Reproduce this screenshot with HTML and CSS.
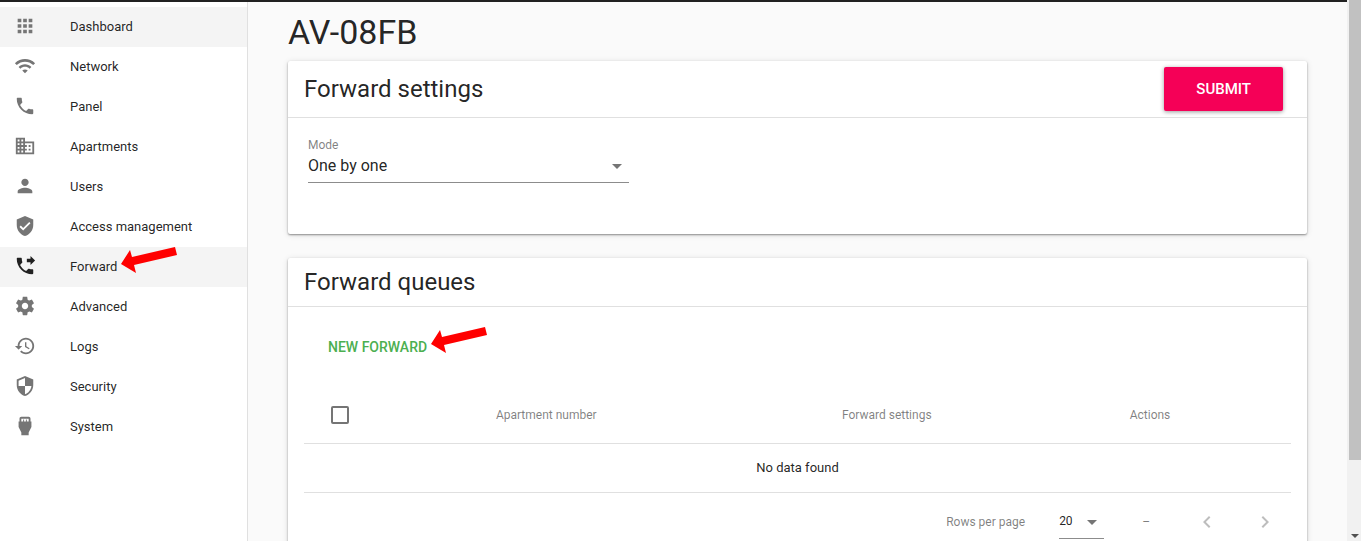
FILE: index.html
```html
<!DOCTYPE html>
<html lang="en">
<head>
    <meta charset="UTF-8">
    <meta name="viewport" content="width=device-width, initial-scale=1.0">
    <title>AV-08FB - Forward</title>
    <link rel="stylesheet" href="styles.css">
</head>
<body>
    <div class="page">
        <div class="topbar"></div>

        <div class="layout">
            <nav class="sidebar">
                <a href="#dashboard" class="nav-item highlighted">
                    <svg class="icon" viewBox="0 0 24 24"><path d="M4 8h4V4H4v4zm6 12h4v-4h-4v4zm-6 0h4v-4H4v4zm0-6h4v-4H4v4zm6 0h4v-4h-4v4zm6-10v4h4V4h-4zm-6 4h4V4h-4v4zm6 6h4v-4h-4v4zm0 6h4v-4h-4v4z"/></svg>
                    <span>Dashboard</span>
                </a>
                <a href="#network" class="nav-item">
                    <svg class="icon" viewBox="0 0 24 24"><path d="M1 9l2 2c4.97-4.97 13.03-4.97 18 0l2-2C16.93 2.93 7.08 2.93 1 9zm8 8l3 3 3-3c-1.65-1.66-4.34-1.66-6 0zm-4-4l2 2c2.76-2.76 7.24-2.76 10 0l2-2C15.14 9.14 8.87 9.14 5 13z"/></svg>
                    <span>Network</span>
                </a>
                <a href="#panel" class="nav-item">
                    <svg class="icon" viewBox="0 0 24 24"><path d="M6.62 10.79c1.44 2.83 3.76 5.14 6.59 6.59l2.2-2.2c.27-.27.67-.36 1.02-.24 1.12.37 2.33.57 3.57.57.55 0 1 .45 1 1V20c0 .55-.45 1-1 1-9.39 0-17-7.61-17-17 0-.55.45-1 1-1h3.5c.55 0 1 .45 1 1 0 1.25.2 2.45.57 3.57.11.35.03.74-.25 1.02l-2.2 2.2z"/></svg>
                    <span>Panel</span>
                </a>
                <a href="#apartments" class="nav-item">
                    <svg class="icon" viewBox="0 0 24 24"><path d="M12 7V3H2v18h20V7H12zM6 19H4v-2h2v2zm0-4H4v-2h2v2zm0-4H4V9h2v2zm0-4H4V5h2v2zm4 12H8v-2h2v2zm0-4H8v-2h2v2zm0-4H8V9h2v2zm0-4H8V5h2v2zm10 12h-8v-2h2v-2h-2v-2h2v-2h-2V9h8v10zm-2-8h-2v2h2v-2zm0 4h-2v2h2v-2z"/></svg>
                    <span>Apartments</span>
                </a>
                <a href="#users" class="nav-item">
                    <svg class="icon" viewBox="0 0 24 24"><path d="M12 12c2.21 0 4-1.79 4-4s-1.79-4-4-4-4 1.79-4 4 1.79 4 4 4zm0 2c-2.67 0-8 1.34-8 4v2h16v-2c0-2.66-5.33-4-8-4z"/></svg>
                    <span>Users</span>
                </a>
                <a href="#access" class="nav-item">
                    <svg class="icon" viewBox="0 0 24 24"><path d="M12 1L3 5v6c0 5.55 3.84 10.74 9 12 5.16-1.26 9-6.45 9-12V5l-9-4zm-2 16l-4-4 1.41-1.41L10 14.17l6.59-6.59L18 9l-8 8z"/></svg>
                    <span>Access management</span>
                </a>
                <a href="#forward" class="nav-item highlighted active">
                    <svg class="icon" viewBox="0 0 24 24"><path d="M18 11l5-5-5-5v3h-4v4h4v3zm2 4.5c-1.25 0-2.45-.2-3.57-.57-.35-.11-.74-.03-1.02.24l-2.2 2.2c-2.83-1.44-5.15-3.75-6.59-6.59l2.2-2.21c.28-.26.36-.65.25-1C8.7 6.45 8.5 5.25 8.5 4c0-.55-.45-1-1-1H4c-.55 0-1 .45-1 1 0 9.39 7.61 17 17 17 .55 0 1-.45 1-1v-3.5c0-.55-.45-1-1-1z"/></svg>
                    <span class="pointed">Forward
                        <svg class="pointer" viewBox="0 0 56 26"><path d="M0 17L9 3l2 7L54 0l2 8-43 10 2 8z"/></svg>
                    </span>
                </a>
                <a href="#advanced" class="nav-item">
                    <svg class="icon" viewBox="0 0 24 24"><path d="M19.43 12.98c.04-.32.07-.64.07-.98s-.03-.66-.07-.98l2.11-1.65c.19-.15.24-.42.12-.64l-2-3.46c-.12-.22-.39-.3-.61-.22l-2.49 1c-.52-.4-1.08-.73-1.69-.98l-.38-2.65C14.46 2.18 14.25 2 14 2h-4c-.25 0-.46.18-.49.42l-.38 2.65c-.61.25-1.17.59-1.69.98l-2.49-1c-.23-.09-.49 0-.61.22l-2 3.46c-.13.22-.07.49.12.64l2.11 1.65c-.04.32-.07.65-.07.98s.03.66.07.98l-2.11 1.65c-.19.15-.24.42-.12.64l2 3.46c.12.22.39.3.61.22l2.49-1c.52.4 1.08.73 1.69.98l.38 2.65c.03.24.24.42.49.42h4c.25 0 .46-.18.49-.42l.38-2.65c.61-.25 1.17-.59 1.69-.98l2.49 1c.23.09.49 0 .61-.22l2-3.46c.12-.22.07-.49-.12-.64l-2.11-1.65zM12 15.5c-1.93 0-3.5-1.57-3.5-3.5s1.57-3.5 3.5-3.5 3.5 1.57 3.5 3.5-1.57 3.5-3.5 3.5z"/></svg>
                    <span>Advanced</span>
                </a>
                <a href="#logs" class="nav-item">
                    <svg class="icon" viewBox="0 0 24 24"><path d="M13 3c-4.97 0-9 4.03-9 9H1l3.89 3.89.07.14L9 12H6c0-3.87 3.13-7 7-7s7 3.13 7 7-3.13 7-7 7c-1.93 0-3.68-.79-4.94-2.06l-1.42 1.42C8.27 19.99 10.51 21 13 21c4.97 0 9-4.03 9-9s-4.03-9-9-9zm-1 5v5l4.28 2.54.72-1.21-3.5-2.08V8H12z"/></svg>
                    <span>Logs</span>
                </a>
                <a href="#security" class="nav-item">
                    <svg class="icon" viewBox="0 0 24 24"><path d="M12 1L3 5v6c0 5.55 3.84 10.74 9 12 5.16-1.26 9-6.45 9-12V5l-9-4zm0 10.99h7c-.53 4.12-3.28 7.79-7 8.94V12H5V6.3l7-3.11v8.8z"/></svg>
                    <span>Security</span>
                </a>
                <a href="#system" class="nav-item">
                    <svg class="icon" viewBox="0 0 24 24"><path d="M18 7V4c0-1.1-.9-2-2-2H8c-1.1 0-2 .9-2 2v3H5v6l3 6v3h8v-3l3-6V7h-1zM8 4h8v3h-2V5h-1v2h-2V5h-1v2H8V4z"/></svg>
                    <span>System</span>
                </a>
            </nav>

            <main class="content">
                <h1>AV-08FB</h1>

                <section class="card">
                    <div class="card-header">
                        <h2>Forward settings</h2>
                        <button type="submit" form="settings-form" class="submit-btn">Submit</button>
                    </div>
                    <form id="settings-form" class="settings-form">
                        <div class="field">
                            <label for="mode">Mode</label>
                            <div class="select-wrap">
                                <select id="mode">
                                    <option>One by one</option>
                                    <option>All together</option>
                                </select>
                                <svg class="caret" viewBox="0 0 10 5"><path d="M0 0h10L5 5z"/></svg>
                            </div>
                        </div>
                    </form>
                </section>

                <section class="card">
                    <div class="card-header compact">
                        <h2>Forward queues</h2>
                    </div>
                    <div class="queues">
                        <div class="toolbar">
                            <button type="button" class="text-btn pointed">New forward
                                <svg class="pointer" viewBox="0 0 56 26"><path d="M0 17L9 3l2 7L54 0l2 8-43 10 2 8z"/></svg>
                            </button>
                        </div>
                        <table>
                            <thead>
                                <tr>
                                    <th class="col-check"><input type="checkbox" aria-label="Select all"></th>
                                    <th class="col-wide">Apartment number</th>
                                    <th class="col-wide">Forward settings</th>
                                    <th class="col-actions">Actions</th>
                                </tr>
                            </thead>
                            <tbody>
                                <tr>
                                    <td colspan="4">No data found</td>
                                </tr>
                            </tbody>
                        </table>
                        <div class="pagination">
                            <label for="rows">Rows per page</label>
                            <div class="select-wrap small">
                                <select id="rows">
                                    <option>20</option>
                                    <option>50</option>
                                </select>
                                <svg class="caret" viewBox="0 0 10 5"><path d="M0 0h10L5 5z"/></svg>
                            </div>
                            <span class="range">–</span>
                            <button type="button" class="page-btn" aria-label="Previous page" disabled>
                                <svg viewBox="0 0 24 24"><path d="M15.41 7.41L14 6l-6 6 6 6 1.41-1.41L10.83 12z"/></svg>
                            </button>
                            <button type="button" class="page-btn" aria-label="Next page" disabled>
                                <svg viewBox="0 0 24 24"><path d="M10 6L8.59 7.41 13.17 12l-4.58 4.59L10 18l6-6z"/></svg>
                            </button>
                        </div>
                    </div>
                </section>
            </main>
        </div>
    </div>

    <div class="scrollbar">
        <div class="thumb"></div>
        <svg class="scroll-down" viewBox="0 0 8 4"><path d="M0 0h8L4 4z"/></svg>
    </div>
</body>
</html>
```
FILE: styles.css
```css
:root {
    --text: rgba(0, 0, 0, 0.87);
    --muted: rgba(0, 0, 0, 0.5);
    --icon: #757575;
    --line: #e0e0e0;
    --accent: #f50057;
    --green: #4caf50;
}

* {
    margin: 0;
    padding: 0;
    box-sizing: border-box;
}

body {
    display: flex;
    height: 100vh;
    overflow: hidden;
    font-family: Roboto, sans-serif;
    font-size: 13px;
    line-height: 20px;
    color: var(--text);
    background: #fafafa;
}

button, select {
    font-family: inherit;
    color: inherit;
    border: none;
    background: none;
    cursor: pointer;
}

.page {
    flex: 1;
    display: flex;
    flex-direction: column;
    min-width: 0;
}

.topbar {
    flex: none;
    height: 2px;
    background: #212121;
}

.layout {
    flex: 1;
    display: flex;
    min-height: 0;
}

/* sidebar */
.sidebar {
    flex: none;
    width: 248px;
    padding-top: 5px;
    background: #fff;
    border-right: 1px solid var(--line);
}

.nav-item {
    display: flex;
    align-items: center;
    gap: 34px;
    height: 40px;
    padding: 0 14px;
    color: var(--text);
    text-decoration: none;
}

.nav-item.highlighted {
    background: #f4f4f4;
}

.icon {
    width: 22px;
    height: 22px;
    margin-bottom: 2px;
    fill: var(--icon);
}

.active .icon {
    fill: #212121;
}

.pointed {
    position: relative;
}

.pointer {
    position: absolute;
    left: 100%;
    top: 50%;
    width: 56px;
    height: 26px;
    margin: -20px 0 0 4px;
    fill: #f00;
}

/* content */
.content {
    flex: 1;
    min-width: 0;
    padding: 10px 40px 0;
}

h1 {
    margin-bottom: 9px;
    font-size: 34px;
    font-weight: 400;
    line-height: 40px;
}

h2 {
    font-size: 24px;
    font-weight: 400;
    line-height: 32px;
}

.card {
    margin-bottom: 24px;
    background: #fff;
    border-radius: 2px;
    box-shadow: 0 1px 2px rgba(0, 0, 0, 0.4), 0 1px 6px rgba(0, 0, 0, 0.12);
}

.card-header {
    display: flex;
    align-items: center;
    justify-content: space-between;
    padding: 6px 24px 6px 16px;
    border-bottom: 1px solid var(--line);
}

.card-header.compact {
    padding: 8px 16px;
}

.submit-btn {
    height: 44px;
    padding: 0 32px;
    font-size: 15px;
    font-weight: 500;
    text-transform: uppercase;
    color: #fff;
    background: var(--accent);
    border-radius: 2px;
    box-shadow: 0 1px 4px rgba(0, 0, 0, 0.4);
}

.settings-form {
    display: grid;
    grid-template-columns: repeat(3, 1fr);
    gap: 8px;
    padding: 17px 20px 51px;
}

.field label {
    display: block;
    font-size: 12px;
    color: var(--muted);
}

.select-wrap {
    position: relative;
    border-bottom: 1px solid #8c8c8c;
}

.select-wrap select {
    display: block;
    width: 100%;
    height: 27px;
    padding-bottom: 7px;
    font-size: 16px;
    appearance: none;
    outline: none;
}

.caret {
    position: absolute;
    right: 7px;
    top: 9px;
    width: 10px;
    height: 5px;
    fill: var(--icon);
    pointer-events: none;
}

/* queues */
.queues {
    padding: 16px 16px 24px;
}

.toolbar {
    padding: 6px 24px;
}

.text-btn {
    height: 36px;
    font-size: 14px;
    font-weight: 500;
    text-transform: uppercase;
    color: var(--green);
}

table {
    width: 100%;
    margin-top: 16px;
    border-collapse: collapse;
    table-layout: fixed;
}

th, td {
    height: 49px;
    text-align: center;
    vertical-align: middle;
    border-bottom: 1px solid var(--line);
}

th {
    height: 56px;
    font-size: 12px;
    font-weight: 400;
    color: var(--muted);
}

.col-check {
    width: 72px;
}

.col-wide {
    width: 34.5%;
}

.col-actions {
    padding: 0 56px 0 8px;
}

input[type="checkbox"] {
    display: block;
    width: 18px;
    height: 18px;
    margin: 0 auto;
    appearance: none;
    border: 2px solid var(--icon);
    border-radius: 2px;
}

.pagination {
    display: flex;
    align-items: center;
    justify-content: flex-end;
    padding-top: 12px;
    font-size: 12px;
    color: var(--muted);
}

.select-wrap.small {
    width: 45px;
    margin: 0 38px 0 34px;
    color: var(--text);
}

.small select {
    height: 33px;
    padding-bottom: 0;
    font-size: 12px;
}

.small .caret {
    top: 15px;
}

.range {
    margin-right: 28px;
}

.page-btn {
    width: 58px;
    height: 24px;
}

.page-btn + .page-btn {
    margin-right: -3px;
}

.page-btn svg {
    display: block;
    width: 24px;
    height: 24px;
    margin: 0 auto;
    fill: #bdbdbd;
}

/* page scrollbar */
.scrollbar {
    flex: none;
    display: flex;
    flex-direction: column;
    justify-content: space-between;
    width: 14px;
    padding-left: 2px;
    background: #f1f1f1;
}

.thumb {
    height: 85%;
    background: #c1c1c1;
}

.scroll-down {
    width: 8px;
    height: 4px;
    margin: 0 0 3px 2px;
    fill: #505050;
}
```
